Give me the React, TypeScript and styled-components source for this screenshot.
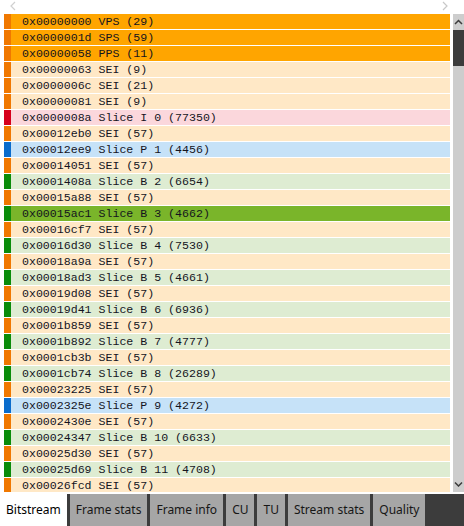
import React from 'react';
import styled, { createGlobalStyle } from 'styled-components';

type Kind = 'param' | 'sei' | 'sliceI' | 'sliceP' | 'sliceB';

interface Unit {
  offset: string;
  label: string;
  kind: Kind;
  selected?: boolean;
}

const units: Unit[] = [
  { offset: '0x00000000', label: 'VPS (29)', kind: 'param' },
  { offset: '0x0000001d', label: 'SPS (59)', kind: 'param' },
  { offset: '0x00000058', label: 'PPS (11)', kind: 'param' },
  { offset: '0x00000063', label: 'SEI (9)', kind: 'sei' },
  { offset: '0x0000006c', label: 'SEI (21)', kind: 'sei' },
  { offset: '0x00000081', label: 'SEI (9)', kind: 'sei' },
  { offset: '0x0000008a', label: 'Slice I 0 (77350)', kind: 'sliceI' },
  { offset: '0x00012eb0', label: 'SEI (57)', kind: 'sei' },
  { offset: '0x00012ee9', label: 'Slice P 1 (4456)', kind: 'sliceP' },
  { offset: '0x00014051', label: 'SEI (57)', kind: 'sei' },
  { offset: '0x0001408a', label: 'Slice B 2 (6654)', kind: 'sliceB' },
  { offset: '0x00015a88', label: 'SEI (57)', kind: 'sei' },
  { offset: '0x00015ac1', label: 'Slice B 3 (4662)', kind: 'sliceB', selected: true },
  { offset: '0x00016cf7', label: 'SEI (57)', kind: 'sei' },
  { offset: '0x00016d30', label: 'Slice B 4 (7530)', kind: 'sliceB' },
  { offset: '0x00018a9a', label: 'SEI (57)', kind: 'sei' },
  { offset: '0x00018ad3', label: 'Slice B 5 (4661)', kind: 'sliceB' },
  { offset: '0x00019d08', label: 'SEI (57)', kind: 'sei' },
  { offset: '0x00019d41', label: 'Slice B 6 (6936)', kind: 'sliceB' },
  { offset: '0x0001b859', label: 'SEI (57)', kind: 'sei' },
  { offset: '0x0001b892', label: 'Slice B 7 (4777)', kind: 'sliceB' },
  { offset: '0x0001cb3b', label: 'SEI (57)', kind: 'sei' },
  { offset: '0x0001cb74', label: 'Slice B 8 (26289)', kind: 'sliceB' },
  { offset: '0x00023225', label: 'SEI (57)', kind: 'sei' },
  { offset: '0x0002325e', label: 'Slice P 9 (4272)', kind: 'sliceP' },
  { offset: '0x0002430e', label: 'SEI (57)', kind: 'sei' },
  { offset: '0x00024347', label: 'Slice B 10 (6633)', kind: 'sliceB' },
  { offset: '0x00025d30', label: 'SEI (57)', kind: 'sei' },
  { offset: '0x00025d69', label: 'Slice B 11 (4708)', kind: 'sliceB' },
  { offset: '0x00026fcd', label: 'SEI (57)', kind: 'sei' },
];

const palette: Record<Kind, { bar: string; bg: string }> = {
  param: { bar: '#f07800', bg: '#ffa500' },
  sei: { bar: '#f07800', bg: '#ffe8c6' },
  sliceI: { bar: '#d6001c', bg: '#fbd7dc' },
  sliceP: { bar: '#0a6ccc', bg: '#c6e2f8' },
  sliceB: { bar: '#0a8c0a', bg: '#deecd2' },
};

const tabs = ['Bitstream', 'Frame stats', 'Frame info', 'CU', 'TU', 'Stream stats', 'Quality'];

const GlobalStyle = createGlobalStyle`
  html, body {
    margin: 0;
    padding: 0;
    background: #ffffff;
  }
  #root {
    width: 464px;
    height: 526px;
  }
`;

const Panel = styled.div`
  width: 464px;
  height: 526px;
  display: flex;
  flex-direction: column;
  background: #ffffff;
  overflow: hidden;
`;

const NavBar = styled.div`
  height: 14px;
  display: flex;
  justify-content: space-between;
  align-items: flex-start;
  padding: 1px 16px 0 10px;
  box-sizing: border-box;
`;

const Body = styled.div`
  height: 478px;
  display: flex;
  padding-left: 4px;
  gap: 3px;
`;

const List = styled.div`
  flex: 1;
  display: flex;
  flex-direction: column;
  overflow: hidden;
`;

const Row = styled.div<{ $bar: string; $bg: string }>`
  flex: none;
  height: 15px;
  margin-bottom: 1px;
  display: flex;
  background: ${p => p.$bg};
  border-left: 7px solid ${p => p.$bar};
  font-family: 'Liberation Mono', 'DejaVu Sans Mono', monospace;
  font-size: 11.6px;
  line-height: 15px;
  color: #14141e;
  white-space: pre;
  padding-left: 11px;
`;

const Scrollbar = styled.div`
  width: 11px;
  height: 478px;
  background: #cdcdcd;
  display: flex;
  flex-direction: column;
`;

const ArrowBox = styled.div<{ $end?: boolean }>`
  height: 16px;
  display: flex;
  align-items: center;
  justify-content: center;
  margin-top: ${p => (p.$end ? 'auto' : '0')};
`;

const Thumb = styled.div`
  height: 36px;
  background: #3c3c3c;
`;

const TabBar = styled.div`
  margin-top: 2px;
  height: 32px;
  display: flex;
  background: #3c3c3c;
  gap: 3px;
`;

const Tab = styled.div<{ $active?: boolean }>`
  display: flex;
  align-items: center;
  padding: 0 6px 1px;
  background: ${p => (p.$active ? '#ffffff' : '#a6a6a6')};
  color: ${p => (p.$active ? '#000000' : '#161616')};
  font-family: 'Noto Sans', 'DejaVu Sans', sans-serif;
  font-size: 12px;
`;

const Chevron: React.FC<{ dir: 'left' | 'right' | 'up' | 'down'; color: string }> = ({ dir, color }) => {
  if (dir === 'left' || dir === 'right') {
    const d = dir === 'left' ? 'M5 1 L1 5 L5 9' : 'M1 1 L5 5 L1 9';
    return (
      <svg width="6" height="10" viewBox="0 0 6 10">
        <path d={d} fill="none" stroke={color} strokeWidth="1.2" />
      </svg>
    );
  }
  const d = dir === 'up' ? 'M1 5 L4.5 1.5 L8 5' : 'M1 1.5 L4.5 5 L8 1.5';
  return (
    <svg width="9" height="6" viewBox="0 0 9 6">
      <path d={d} fill="none" stroke={color} strokeWidth="1.5" />
    </svg>
  );
};

const App: React.FC = () => {
  return (
    <>
      <GlobalStyle />
      <Panel>
        <NavBar>
          <Chevron dir="left" color="#d0d0d0" />
          <Chevron dir="right" color="#c8c8c8" />
        </NavBar>
        <Body>
          <List>
            {units.map(u => {
              const c = palette[u.kind];
              return (
                <Row key={u.offset} $bar={c.bar} $bg={u.selected ? '#7ab52a' : c.bg}>
                  {`${u.offset} ${u.label}`}
                </Row>
              );
            })}
          </List>
          <Scrollbar>
            <ArrowBox>
              <Chevron dir="up" color="#3c3c3c" />
            </ArrowBox>
            <Thumb />
            <ArrowBox $end>
              <Chevron dir="down" color="#3c3c3c" />
            </ArrowBox>
          </Scrollbar>
        </Body>
        <TabBar>
          {tabs.map((t, i) => (
            <Tab key={t} $active={i === 0}>{t}</Tab>
          ))}
        </TabBar>
      </Panel>
    </>
  );
};

export default App;
